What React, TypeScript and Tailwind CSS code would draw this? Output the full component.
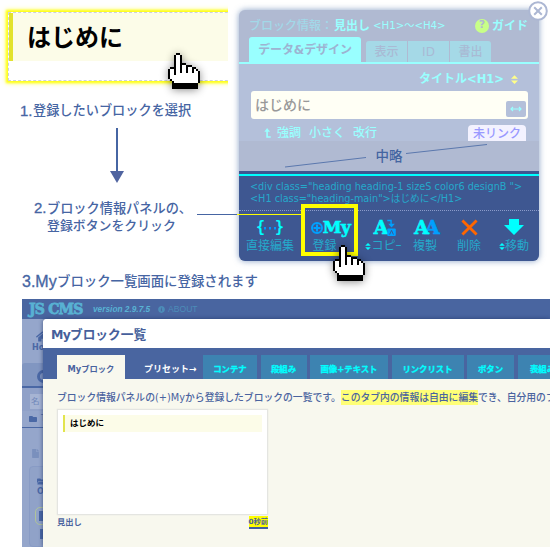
import type { ReactNode } from "react";
import { FaFolder, FaHome, FaFile, FaFolderOpen, FaInfoCircle } from "react-icons/fa";

const HAND = [
  "....##..........",
  "...#oo#.........",
  "...#oo#.........",
  "...#oo#.........",
  "...#oo#.........",
  "...#oo###.......",
  "...#oo#oo###....",
  ".###oo#oo#oo##..",
  "#oo#oo#oo#oo#o#.",
  "#oo#oo#oo#oo#oo#",
  "#oo#ooooooooooo#",
  "#oooooooooooooo#",
  "#oooooooooooooo#",
  ".#ooooooooooooo#",
  "..#oooooooooooo#",
  "..#############.",
  "..#############.",
  "..#############.",
];

function Hand({ className }: { className: string }) {
  return (
    <svg
      viewBox="0 0 16 18"
      shapeRendering="crispEdges"
      className={"absolute z-20 h-9 w-8 overflow-visible drop-shadow-[0_1px_4px_rgba(0,0,0,0.45)] " + className}
    >
      {HAND.flatMap((row, y) =>
        row.split("").map((c, x) =>
          c === "." ? null : (
            <rect key={x + "-" + y} x={x} y={y} width="1" height="1" fill={c === "#" ? "#000" : "#fff"} />
          ),
        ),
      )}
    </svg>
  );
}

function UpDown({ className }: { className: string }) {
  return (
    <svg viewBox="0 0 8 10" className={"shrink-0 " + className} fill="currentColor">
      <path d="M4 0 8 4H0zM4 10 0 6h8z" />
    </svg>
  );
}

function Tool({ icon, label, className }: { icon: ReactNode; label: ReactNode; className: string }) {
  return (
    <div className={"flex shrink-0 flex-col items-center " + className}>
      <div className="flex h-[23px] items-center justify-center">{icon}</div>
      <div className="flex items-center whitespace-nowrap text-[12px] leading-[14px] text-[#25a9cb]">{label}</div>
    </div>
  );
}

function SelectedBlock() {
  return (
    <div className="relative h-[100px] w-[228px] overflow-hidden pl-2 pt-3">
      <div className="h-[69px] w-[240px] border border-dashed border-[#ccd0dd] bg-white shadow-[0_0_2px_2px_#ffff1a,0_0_5px_2px_#ffff66]">
        <div className="flex h-[48px] items-center border-l-4 border-[#e2e22d] bg-[#fcfce8] pl-[14px] text-[24px] font-bold leading-none text-black">
          <span className="pb-[2px]">はじめに</span>
        </div>
      </div>
      <Hand className="left-[168px] top-[53px]" />
    </div>
  );
}

function Steps() {
  return (
    <div className="flex flex-col font-['Liberation_Sans','Noto_Sans_CJK_JP',sans-serif] font-medium text-[#4665a3]">
      <div className="mt-[1px] flex h-5 items-center whitespace-nowrap pl-[20px] text-[13.2px]">
        <span className="w-[13px] text-[15px] [-webkit-text-stroke:0.3px_#4665a3]">1.</span>登録したいブロックを選択
      </div>
      <svg className="ml-[109px] mt-[7px] h-[56px] w-4" viewBox="0 0 16 56">
        <path d="M8 0V44" stroke="#4665a3" strokeWidth="2" />
        <path d="M1 43H15L8 55z" fill="#5064a0" />
      </svg>
      <div className="mt-[16px] flex h-[17px] items-center whitespace-nowrap pl-[34px] text-[13.2px]">
        <span className="w-[13px] text-[15px] [-webkit-text-stroke:0.3px_#4665a3]">2.</span>ブロック情報パネルの、
      </div>
      <div className="flex h-[17px] items-center whitespace-nowrap pl-[47px] text-[12.9px]">登録ボタンをクリック</div>
    </div>
  );
}

function BlockPanel() {
  return (
    <section className="relative mt-[10px] h-[251px] w-[300px] rounded-[6px] bg-[#b0bad2] font-['DejaVu_Sans','Noto_Sans_CJK_JP',sans-serif] shadow-[0_0_6px_rgba(60,100,160,0.6)]">
      <svg viewBox="0 0 20 20" className="absolute -top-[9px] left-[289px] z-10 h-5 w-5">
        <circle cx="10" cy="10" r="8.8" fill="#fff" stroke="#acb7d3" strokeWidth="2" />
        <path d="m6.2 6.2 7.6 7.6m0-7.6-7.6 7.6" stroke="#acb7d3" strokeWidth="2" />
      </svg>
      <div className="flex h-[27px] items-center whitespace-nowrap pl-[10px] pt-[4px] text-[12px] text-[#99f0fa]">
        <span className="w-[85px] font-medium text-[#a2d8e8]">ブロック情報：</span>
        <span className="w-[38px] font-bold text-[#99ffff]">見出し</span>
        <span className="w-[103px] pl-[1px] text-[10.2px] text-[#99ffff]">&lt;H1&gt;～&lt;H4&gt;</span>
        <span className="flex size-[14px] items-center justify-center rounded-full bg-[#c8ff88] text-[11px] font-bold text-[#b0bad2]">?</span>
        <span className="pl-[3px] font-bold text-[#99ffff]">ガイド</span>
      </div>
      <div className="flex h-[27px] items-end gap-px border-b-2 border-[#99ffff] pl-[10px] text-[12px] font-medium leading-none text-[#a9bad4]">
        <div className="mr-1 flex h-[25px] w-[112px] items-center justify-center whitespace-nowrap rounded-t-[3px] bg-[#99ffff] text-[12px] font-bold tracking-[-0.1px] text-[#9db3d1]">データ&amp;デザイン</div>
        <div className="flex h-[21px] w-[41px] items-center justify-center rounded-tl-[3px] bg-[#a5d9e7]">表示</div>
        <div className="flex h-[21px] w-[41px] items-center justify-center bg-[#a5d9e7]">ID</div>
        <div className="flex h-[21px] w-[41px] items-center justify-center rounded-tr-[3px] bg-[#a5d9e7]">書出</div>
      </div>
      <div className="h-[77px] bg-[#b4c0da] px-[12px]">
        <div className="flex h-[27px] items-center justify-end gap-[7px] pb-[1px] pr-[9px] pt-[4px] text-[12px] font-bold text-[#99ffff]">
          <span>タイトル<span className="text-[11.5px]">&lt;H1&gt;</span></span>
          <UpDown className="h-[9px] w-[7px] text-[#ffff88]" />
        </div>
        <div className="flex h-[28px] w-[277px] items-center justify-between rounded-[3px] bg-[#fffff5] pl-[4px] pr-[2px] text-[14px] font-medium text-[#999]">
          <span>はじめに</span>
          <span className="mt-[8px] flex h-4 w-5 items-center justify-center rounded-[2px] bg-[#b4c0da]">
            <svg viewBox="0 0 12 6" className="h-[6px] w-3">
              <path d="M1 3h10M3 1 1 3l2 2M9 1l2 2-2 2" stroke="#99ffff" strokeWidth="1.2" fill="none" />
            </svg>
          </span>
        </div>
        <div className="flex h-[22px] items-end whitespace-nowrap pl-[13px] text-[12px] font-medium leading-[16px] text-[#99ffff]">
          <svg viewBox="0 0 8 12" className="mb-[2px] mr-[5px] h-[11px] w-[8px]">
            <path d="M3 2v7.8h4" fill="none" stroke="#99ffff" strokeWidth="1.8" />
            <path d="M0 4 3 0l3.2 4z" fill="#99ffff" />
          </svg>
          <span className="w-[32px]">強調</span>
          <span className="w-[44px]">小さく</span>
          <span className="w-[115px]">改行</span>
          <span className="flex h-[16px] w-[58px] items-center justify-center rounded-t-[4px] bg-[#f3f2ff] pt-[2px] text-[12px] text-[#9999ff]">未リンク</span>
        </div>
      </div>
      <div className="relative flex h-[30px] items-center justify-center text-[13.5px] font-medium text-[#4465a1]">
        <svg className="absolute inset-0 h-[30px] w-[300px]" viewBox="0 0 300 30">
          <path d="M46 26 127 16.5M167 12.5 248 3.5" stroke="#5b78ae" strokeWidth="1" />
        </svg>
        中略
      </div>
      <div className="h-[90px] rounded-b-[6px] bg-[#3e5791] pt-[3px]">
        <div className="h-[36px] whitespace-pre border-t-2 border-[#00ffff] pl-[11px] pt-[5px] text-[9.7px] leading-[12px] text-[#25a9cb]">
          <div>{'<div class="heading heading-1 sizeS color6 designB ">'}</div>
          <div>{'<H1 class="heading-main">はじめに</H1>'}</div>
        </div>
        <div className="flex border-t border-dotted border-[#8b9bca] pt-[5px]">
          <Tool
            className="w-[62px]"
            icon={
              <span className="flex items-center gap-px font-['DejaVu_Sans_Mono',monospace] text-[15px] font-bold leading-none text-[#00ffff]">
                {"{"}
                <svg viewBox="0 0 12 3" className="-mx-[2px] mt-[2px] h-[3px] w-3">
                  <path d="M0 0h2v2.5H0zM5 0h2v2.5H5zM10 0h2v2.5h-2z" fill="#0099ff" />
                </svg>
                {"}"}
              </span>
            }
            label="直接編集"
          />
          <Tool
            className="w-[59px]"
            icon={
              <span className="flex items-center">
                <svg viewBox="0 0 12 12" className="size-[12px]">
                  <circle cx="6" cy="6" r="5" fill="none" stroke="#00a0ff" strokeWidth="2" />
                  <path d="M6 2.5v7M2.5 6h7" stroke="#00a0ff" strokeWidth="2" />
                </svg>
                <span className="font-['DejaVu_Serif',serif] text-[17px] font-bold leading-none tracking-[-0.5px] text-[#00ffff] [-webkit-text-stroke:0.6px_#00ffff]">My</span>
              </span>
            }
            label={<span className="pr-[12px]">登録</span>}
          />
          <Tool
            className="w-[47px]"
            icon={
              <span className="flex items-center pl-1">
                <span className="font-['DejaVu_Serif',serif] text-[19px] font-bold leading-none tracking-[-1px] text-[#00ffff] [-webkit-text-stroke:0.6px_#00ffff]">A</span>
                <svg viewBox="0 0 10 18" className="h-[17px] w-[10px]">
                  <path d="M0 1.5h4V6" stroke="#00a0ff" strokeWidth="1.5" fill="none" />
                  <path d="M1 5h7L4.5 9z" fill="#00a0ff" />
                  <rect x="0" y="10" width="9" height="8" rx="1" fill="#00a0ff" />
                  <path d="m2.5 16.5 2-4.5 2 4.5" stroke="#3e5791" fill="none" />
                </svg>
              </span>
            }
            label={<><UpDown className="h-[7px] w-[6px] text-[#00ffff]" />コピｰ</>}
          />
          <Tool
            className="w-[36px]"
            icon={
              <span className="font-['DejaVu_Serif',serif] text-[19px] font-bold leading-none tracking-[-4px]">
                <span className="text-[#00a0ff] [-webkit-text-stroke:0.6px_currentColor]"><span className="relative z-10 text-[#00ffff]">A</span>A</span>
              </span>
            }
            label="複製"
          />
          <Tool
            className="w-[52px]"
            icon={
              <svg viewBox="0 0 18 18" className="size-[17px]">
                <path d="m1.5 1.5 15 15m0-15-15 15" stroke="#ff6600" strokeWidth="3" />
              </svg>
            }
            label="削除"
          />
          <Tool
            className="w-[38px]"
            icon={
              <svg viewBox="0 0 20 17" className="h-[17px] w-5">
                <path d="M5 0h10v6h5L10 16 0 6h5z" fill="#00ffff" />
              </svg>
            }
            label={<><UpDown className="h-[7px] w-[6px] text-[#00ffff]" />移動</>}
          />
        </div>
      </div>
      <div className="absolute left-[62px] top-[194px] h-[52px] w-[57px] border-4 border-[#ffff00]" />
      <div className="absolute left-[-42px] top-[204px] h-px w-[40px] bg-[#4665a3]" />
      <div className="absolute left-[-2px] top-[204px] h-px w-[64px] bg-[#ffff00]" />
      <Hand className="left-[94px] top-[235px]" />
    </section>
  );
}

const TABS = [
  { label: "コンテナ", width: "w-[54px]" },
  { label: "段組み", width: "w-[46px]" },
  { label: "画像+テキスト", width: "w-[78px]" },
  { label: "リンクリスト", width: "w-[72px]" },
  { label: "ボタン", width: "w-[47px]" },
  { label: "表組み", width: "w-[50px]" },
];

function Sidebar() {
  return (
    <aside className="flex h-[228px] w-[21px] shrink-0 flex-col overflow-hidden bg-[#95a6cb] text-[#4a68a5]">
      <div className="h-[48px] pl-[10px] pt-[11px]">
        <FaHome className="ml-[4px] size-[13px]" />
        <span className="block text-[8px] font-bold leading-[10px]">Ho</span>
      </div>
      <div className="h-[28px] rounded-tl-[3px] border-b-2 border-[#4a68a5] bg-[#8196c1] pl-[15px] pt-[7px]">
        <div className="size-[13px] rounded-full border-[3px] border-[#4a68a5]" />
      </div>
      <div className="h-[25px] bg-[#90a1c8] pl-[8px] pt-[6px]">
        <span className="block h-[15px] w-10 bg-[#a6b4d3] pl-[1px] text-[8.5px] leading-[14px] text-[#7188ba]">名</span>
      </div>
      <div className="flex h-[19px] items-center gap-1 border-b border-[#4a68a5] pl-[7px]">
        <FaFolder className="size-[8px] shrink-0" />
        <span className="text-[8px]">T</span>
      </div>
      <FaFile className="ml-[9px] mt-[21px] size-[9px] shrink-0 opacity-35" />
      <div className="ml-[7px] mt-[8px] flex h-[90px] w-10 flex-col rounded-[4px] border border-[#889bc5] bg-[#90a2c8] pl-[7px] pt-[10px]">
        <FaFolderOpen className="size-[9px] shrink-0" />
        <span className="text-[8px] font-bold leading-[11px]">O</span>
        <div className="-ml-[2px] mt-[10px] h-[18px] w-8 shrink-0 rounded-[5px] border border-[#afc39a] pl-[3px] pt-[3px]">
          <div className="h-[10px] w-3 bg-[#4a68a5]" />
        </div>
        <div className="ml-[3px] mt-[4px] h-[10px] w-3 bg-[#4a68a5]" />
      </div>
    </aside>
  );
}

function CmsWindow() {
  return (
    <section className="ml-[22px] h-[248px] w-[528px] overflow-hidden bg-[#95a6cb] font-['DejaVu_Sans','Noto_Sans_CJK_JP',sans-serif]">
      <header className="flex h-[20px] items-center whitespace-nowrap bg-[#4965a0] pl-[7px] text-[#58b2d3]">
        <span className="w-[64px] font-['DejaVu_Serif',serif] text-[14px] font-bold tracking-[-0.8px] [-webkit-text-stroke:0.8px_#58b2d3]">JS CMS</span>
        <span className="w-[65px] font-['Liberation_Sans',sans-serif] text-[8.3px] font-bold italic">version 2.9.7.5</span>
        <FaInfoCircle className="mr-[3px] size-[7px] shrink-0 text-[#4c8cb8]" />
        <span className="font-['Liberation_Sans',sans-serif] text-[8.6px] text-[#4c8cb8]">ABOUT</span>
      </header>
      <div className="flex">
        <Sidebar />
        <main className="h-[228px] w-[507px] shrink-0 overflow-hidden rounded-tl-[4px] bg-[#f8f8ee] text-[#4a639f] shadow-[0_0_4px_rgba(30,50,100,0.7)]">
          <h1 className="flex h-[29px] items-center bg-white pl-[8px] pt-[3px] text-[12.7px] font-bold tracking-[0] text-[#465f9b]">
            <span className="w-[19px] text-[12.5px] tracking-[-0.8px]">My</span>ブロック一覧
          </h1>
          <nav className="flex h-[31px] items-end gap-[3.5px] whitespace-nowrap bg-[#4965a0] pl-[14px] text-[8.4px] font-bold leading-none">
            <div className="flex h-[24px] w-[68px] shrink-0 items-center justify-center bg-[#f8f8ee] pt-[5px] text-[8.3px]">Myブロック</div>
            <div className="flex h-[24px] w-[71px] shrink-0 items-center justify-end pr-[3px] pt-[5px] text-[9px] text-white">プリセット→</div>
            {TABS.map((tab) => (
              <div key={tab.label} className={"flex h-[24px] shrink-0 items-center justify-center bg-[#3d83b1] pt-[5px] text-[#00ffff] [-webkit-text-stroke:0.3px_#00ffff] " + tab.width}>
                {tab.label}
              </div>
            ))}
          </nav>
          <p className="flex h-[29px] items-center whitespace-nowrap pl-[14px] pt-[8px] text-[9.8px] font-medium leading-[15px]">
            ブロック情報パネルの(+)Myから登録したブロックの一覧です。
            <mark className="bg-[#ffff77] text-[#4a639f]">このタブ内の情報は自由に編集</mark>
            でき、自分用のブ
          </p>
          <div className="ml-[14px] mt-[1px] h-[106px] w-[211px] border border-[#e4e5e1] bg-white p-[5px] shadow-[0_0_1px_#ddd]">
            <div className="h-[17px] border-l-2 border-[#e2e44d] bg-[#fcfce8] pl-[5px] text-[8.5px] font-bold leading-[16px] text-black">はじめに</div>
          </div>
          <div className="ml-[14px] flex w-[211px] justify-between text-[8.3px] font-bold leading-[11px]">
            <span className="pt-[2px]">見出し</span>
            <span className="mt-[1px] h-[13px] border-b-2 border-[#42609f] bg-[#ffff00] text-[7.2px]">0秒前</span>
          </div>
        </main>
      </div>
    </section>
  );
}

export default function App() {
  return (
    <div className="h-[547px] w-[550px] overflow-hidden bg-white font-['Noto_Sans_CJK_JP',sans-serif]">
      <div className="flex h-[271px]">
        <div className="w-[239px] shrink-0">
          <SelectedBlock />
          <Steps />
        </div>
        <BlockPanel />
      </div>
      <div className="flex h-[28px] items-start whitespace-nowrap pl-[22px] pt-px font-['Liberation_Sans','Noto_Sans_CJK_JP',sans-serif] text-[13.4px] font-medium leading-[20px] text-[#4665a3]">
        <span className="w-[35px] text-[16px] [-webkit-text-stroke:0.3px_#4665a3]">3.My</span>ブロック一覧画面に登録されます
      </div>
      <CmsWindow />
    </div>
  );
}
